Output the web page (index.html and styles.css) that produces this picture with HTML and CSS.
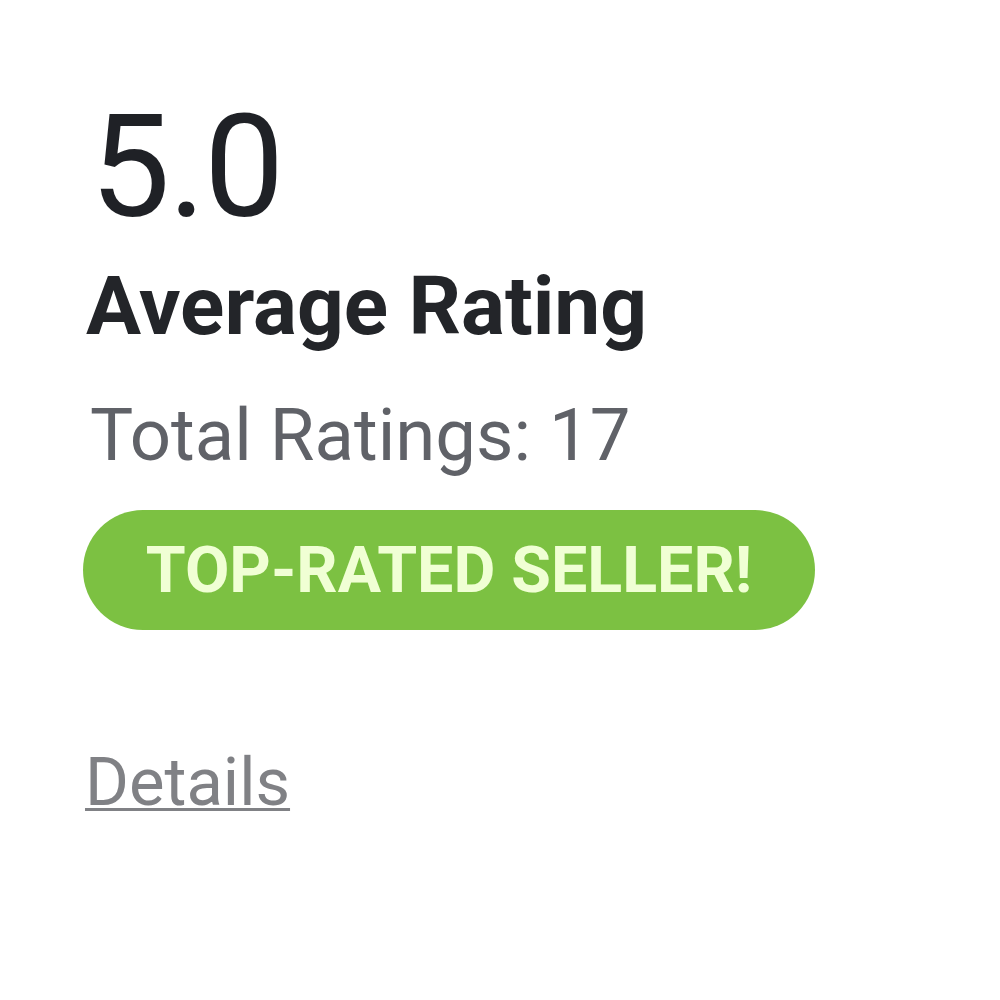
FILE: index.html
```html
<!DOCTYPE html>
<html>
<head>
<meta charset="utf-8">
<link rel="stylesheet" href="styles.css">
</head>
<body>
<div class="rating-card">
  <div class="score">5.0</div>
  <div class="label">Average Rating</div>
  <div class="total">Total Ratings: 17</div>
  <div class="badge">TOP-RATED SELLER!</div>
  <a class="details" href="#">Details</a>
</div>
</body>
</html>
```
FILE: styles.css
```css
html, body {
  margin: 0;
  padding: 0;
  background: #ffffff;
}
body {
  font-family: Roboto, "Liberation Sans", sans-serif;
  width: 1000px;
  height: 1000px;
}
.rating-card {
  display: flex;
  flex-direction: column;
  align-items: flex-start;
  padding: 87px 0 0 83px;
}
.score {
  font-size: 143px;
  line-height: 160px;
  color: #1f2126;
  margin-left: 7px;
  letter-spacing: -2px;
}
.label {
  font-size: 82px;
  font-weight: 700;
  line-height: 80px;
  color: #232529;
  margin-top: 19px;
  margin-left: 3px;
}
.total {
  font-size: 72.5px;
  line-height: 80px;
  color: #606268;
  margin-top: 50px;
  margin-left: 7px;
}
.badge {
  margin-top: 34px;
  height: 120px;
  width: 732px;
  box-sizing: border-box;
  border-radius: 60px;
  background: #7cc142;
  color: #f0ffd4;
  font-size: 64.5px;
  font-weight: 700;
  display: flex;
  align-items: center;
  justify-content: center;
}
.details {
  margin-top: 116px;
  font-size: 67px;
  line-height: 72px;
  color: #808185;
  text-decoration: underline;
  text-underline-offset: 3px;
  text-decoration-thickness: 3px;
  margin-left: 2px;
}
```
